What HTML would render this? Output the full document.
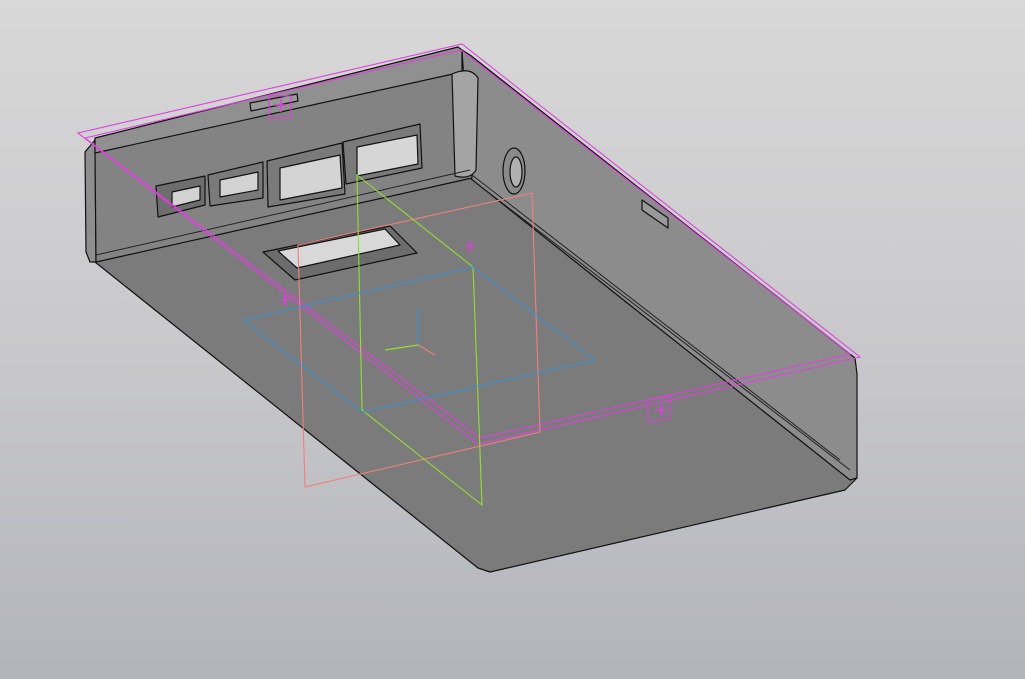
<!DOCTYPE html>
<html><head><style>
html,body{margin:0;padding:0;}
body{width:1025px;height:679px;overflow:hidden;background:linear-gradient(#d8d8d8,#c9c9cc 50%,#b3b4bb);}
svg{display:block}
</style></head><body>
<svg width="1025" height="679" viewBox="0 0 1025 679" xmlns="http://www.w3.org/2000/svg">
<g stroke="#111" stroke-width="1.2" stroke-linejoin="round">
<!-- main bottom face -->
<path d="M90,258 L470,176 L855,470 L857,478 L845,490 L490,572 L478,568 Z" fill="#7b7b7b"/>
<!-- right wall -->
<path d="M462,50 L470,55 L855,358 L857,374 L857,478 L850,480 L470,178 Z" fill="#8c8c8c"/>
<!-- left end strip -->
<path d="M85,152 L95,140 L96,262 L90,262 L86,252 Z" fill="#8e8e8e"/>
<!-- back wall face -->
<path d="M95,152 L456,72 L470,74 L472,178 L96,262 Z" fill="#838383"/>
<!-- rim -->
<path d="M95,138 L458,47 L462,50 L462,72 L95,153 Z" fill="#909090"/>
<!-- corner fillet -->
<path d="M452,74 Q470,66 478,78 L476,170 Q470,180 455,176 Z" fill="#a4a4a4"/>
<!-- windows -->
<path d="M156,186 L205,176 L205,205 L158,217 Z" fill="#6e6e6e"/>
<path d="M172,192 L200,186 L200,200 L172,207 Z" fill="#d2d2d2"/>
<path d="M208,175 L263,162 L263,198 L210,206 Z" fill="#7a7a7a"/>
<path d="M220,180 L258,172 L258,190 L220,197 Z" fill="#d2d2d2"/>
<path d="M267,161 L342,143 L345,194 L268,207 Z" fill="#7a7a7a"/>
<path d="M280,168 L340,155 L342,188 L280,200 Z" fill="#d4d4d4"/>
<path d="M343,142 L420,124 L422,168 L346,184 Z" fill="#7a7a7a"/>
<path d="M357,147 L417,135 L418,164 L357,176 Z" fill="#d6d6d6"/>
<!-- floor slot -->
<path d="M263,252 L390,226 L417,253 L295,280 Z" fill="#6c6c6c"/>
<path d="M278,251 L385,229 L400,245 L297,268 Z" fill="#d8d8d8"/>
<!-- hole -->
<ellipse cx="514" cy="171" rx="11" ry="23" fill="#8a8a8a"/>
<ellipse cx="516" cy="172" rx="6" ry="15" fill="#b0b0b0"/>
<!-- side small slot -->
<path d="M642,200 L668,218 L668,228 L642,210 Z" fill="#999"/>
<!-- tab -->
<path d="M250,103 L297,94 L298,101 L251,111 Z" fill="#999"/>
</g>
<!-- inner edge lines -->
<g stroke="#222" stroke-width="1" fill="none">
<path d="M475,182 L850,470"/>
<path d="M472,175 L840,460"/>
<path d="M96,255 L470,170"/>
</g>
<!-- magenta plane -->
<g stroke="#e040e0" stroke-width="1.1" fill="none">
<path d="M78,133 L462,44 L860,357 L478,444 Z"/>
<path d="M85,138 L461,50 L850,354 L480,438 Z"/>
<rect x="269" y="96" width="22" height="22"/>
<path d="M648,400 L670,396 L670,418 L648,422 Z"/>
<path d="M280,300 L290,300 M285,294 L285,306 M465,246 L475,246 M470,240 L470,252 M655,410 L667,410 M661,404 L661,416 M275,105 L287,105 M281,99 L281,112" stroke-width="1.5"/>
</g>
<!-- salmon plane -->
<path d="M298,245 L532,193 L540,432 L305,487 Z" stroke="#f08080" stroke-width="1.1" fill="none"/>
<!-- green plane -->
<path d="M357,175 L473,267 L482,505 L362,410 Z" stroke="#90e030" stroke-width="1.1" fill="none"/>
<!-- blue plane -->
<path d="M243,320 L473,267 L595,360 L362,412 Z" stroke="#3a8fd0" stroke-width="1.1" fill="none"/>
<!-- axes -->
<path d="M418,345 L418,308" stroke="#3a8fd0" stroke-width="1.3"/>
<path d="M418,345 L385,350" stroke="#90e030" stroke-width="1.3"/>
<path d="M418,345 L435,355" stroke="#f08080" stroke-width="1.3"/>
</svg>
</body></html>
